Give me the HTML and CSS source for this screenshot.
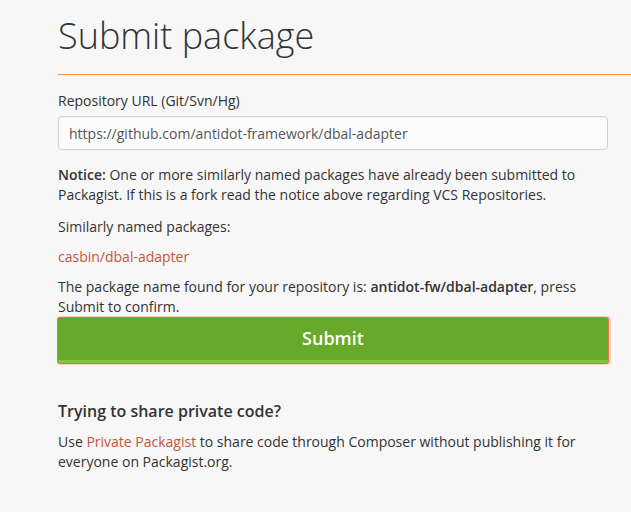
FILE: index.html
```html
<!DOCTYPE html>
<html lang="en">
<head>
<meta charset="utf-8">
<title>Submit package</title>
<link rel="stylesheet" href="styles.css">
</head>
<body>
<div class="page">
  <div class="page-header">
    <h1 class="title">Submit package</h1>
  </div>
  <div class="rule"></div>
  <div class="content">
    <form class="form">
      <div class="form-group">
        <label class="label" for="repo">Repository URL (Git/Svn/Hg)</label>
        <input class="input" id="repo" type="text" value="https://github.com/antidot-framework/dbal-adapter">
      </div>
      <p class="text"><strong>Notice:</strong> One or more similarly named packages have already been submitted to Packagist. If this is a fork read the notice above regarding VCS Repositories.</p>
      <p class="text similar">Similarly named packages:</p>
      <p class="text"><a class="link" href="#">casbin/dbal-adapter</a></p>
      <p class="text confirm">The package name found for your repository is: <strong>antidot-fw/dbal-adapter</strong>, press Submit to confirm.</p>
      <button class="btn" type="button">Submit</button>
    </form>
    <div class="private">
      <h2 class="subtitle">Trying to share private code?</h2>
      <p class="text">Use <a class="link" href="#">Private Packagist</a> to share code through Composer without publishing it for everyone on Packagist.org.</p>
    </div>
  </div>
</div>
</body>
</html>
```

FILE: styles.css
```css
html, body {
  margin: 0;
  padding: 0;
}
body {
  background: #f7f7f7;
  font-family: "Open Sans", "Liberation Sans", sans-serif;
  font-size: 14px;
  line-height: 20px;
  color: #333;
  overflow: hidden;
}
.page {
  padding-left: 58px;
}
.page-header {
  padding-top: 16px;
  padding-bottom: 8px;
}
.rule {
  height: 1px;
  background: #f5962a;
}
.title {
  margin: 0 0 10px;
  font-size: 36px;
  font-weight: 300;
  line-height: 40px;
  color: #333;
}
.content {
  width: 550px;
  padding-top: 16px;
}
.form-group {
  margin-bottom: 15px;
}
.label {
  display: block;
  margin-bottom: 5px;
  font-weight: 400;
}
.input {
  display: block;
  box-sizing: border-box;
  width: 100%;
  height: 34px;
  padding: 6px 10px;
  font-family: inherit;
  font-size: 14px;
  color: #555;
  background: #fcfcfc;
  border: 1px solid #d2d2d2;
  border-radius: 4px;
  box-shadow: inset 0 1px 1px rgba(0,0,0,0.04);
}
.text {
  margin: 0 0 10px;
}
.similar {
  margin-top: 12px;
}
.confirm {
  margin-bottom: 0;
}
.text strong {
  font-weight: 600;
}
.link {
  color: #c8553a;
  text-decoration: none;
}
.btn {
  display: block;
  box-sizing: border-box;
  width: 550px;
  height: 45px;
  margin-top: 1px;
  padding: 0 0 2px;
  font-family: inherit;
  font-size: 18px;
  font-weight: 600;
  color: #fff;
  background: #69a929;
  border: 0;
  border-bottom: 3px solid #84c33f;
  border-radius: 2px;
  box-shadow: 0 0 0 1px #de7748, 1px 0 0 2px rgba(240,150,120,0.4);
}
.private {
  padding-top: 36px;
}
.subtitle {
  margin: 0 0 9px;
  font-size: 16px;
  font-weight: 600;
  line-height: 24px;
  color: #333;
}
```
